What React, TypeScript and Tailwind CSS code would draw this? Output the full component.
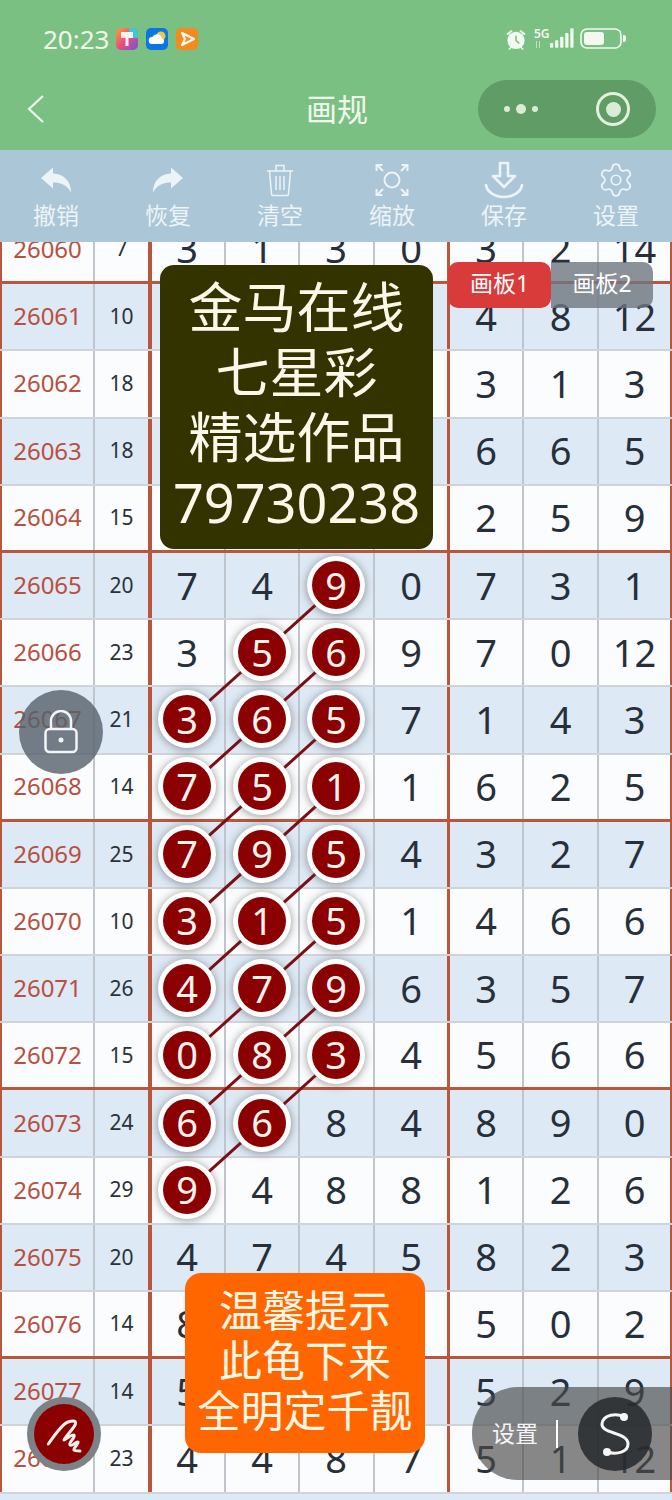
import { Settings } from "lucide-react";

type Row = { id: number; sum: number; nums: string[]; hits?: number[] };

const rows: Row[] = [
  { id: 26060, sum: 7, nums: ["3", "1", "3", "0", "3", "2", "14"] },
  { id: 26061, sum: 10, nums: ["", "", "", "", "4", "8", "12"] },
  { id: 26062, sum: 18, nums: ["", "", "", "", "3", "1", "3"] },
  { id: 26063, sum: 18, nums: ["", "", "", "", "6", "6", "5"] },
  { id: 26064, sum: 15, nums: ["", "", "", "", "2", "5", "9"] },
  { id: 26065, sum: 20, nums: ["7", "4", "9", "0", "7", "3", "1"], hits: [2] },
  { id: 26066, sum: 23, nums: ["3", "5", "6", "9", "7", "0", "12"], hits: [1, 2] },
  { id: 26067, sum: 21, nums: ["3", "6", "5", "7", "1", "4", "3"], hits: [0, 1, 2] },
  { id: 26068, sum: 14, nums: ["7", "5", "1", "1", "6", "2", "5"], hits: [0, 1, 2] },
  { id: 26069, sum: 25, nums: ["7", "9", "5", "4", "3", "2", "7"], hits: [0, 1, 2] },
  { id: 26070, sum: 10, nums: ["3", "1", "5", "1", "4", "6", "6"], hits: [0, 1, 2] },
  { id: 26071, sum: 26, nums: ["4", "7", "9", "6", "3", "5", "7"], hits: [0, 1, 2] },
  { id: 26072, sum: 15, nums: ["0", "8", "3", "4", "5", "6", "6"], hits: [0, 1, 2] },
  { id: 26073, sum: 24, nums: ["6", "6", "8", "4", "8", "9", "0"], hits: [0, 1] },
  { id: 26074, sum: 29, nums: ["9", "4", "8", "8", "1", "2", "6"], hits: [0] },
  { id: 26075, sum: 20, nums: ["4", "7", "4", "5", "8", "2", "3"] },
  { id: 26076, sum: 14, nums: ["8", "", "", "", "5", "0", "2"] },
  { id: 26077, sum: 14, nums: ["5", "", "", "", "5", "2", "9"] },
  { id: 26078, sum: 23, nums: ["4", "4", "8", "7", "5", "1", "12"] },
];

const ROW_H = 67.2;
const colX = [187, 262, 336];

// diagonal links, each one runs from the third ball column down to the first
const links = [5, 6, 7, 8, 9, 10, 11, 12];

const cellBorders = [
  "pr-[2px] border-r-2 border-r-[#c0c5cb]",
  "border-r-2 border-r-[#c0c5cb]",
  "pr-[1px] border-r-2 border-r-[#c0c5cb]",
  "border-r-[3px] border-r-[#b8573c]",
  "border-r-2 border-r-[#c0c5cb]",
  "border-r-2 border-r-[#c0c5cb]",
  "border-r-2 border-r-[#b8573c]",
];

const Ball = ({ n }: { n: string }) => (
  <div className="relative z-10 flex h-[58px] w-[58px] items-center justify-center rounded-full bg-white shadow-[0_1px_8px_rgba(60,60,60,0.55)]">
    <div className="flex h-[48px] w-[48px] items-center justify-center rounded-full bg-[#8b0000] text-[38px] text-[#fbf3ee]">
      {n}
    </div>
  </div>
);

const TableRow = ({ row, index }: { row: Row; index: number }) => {
  const isBlue = index % 2 === 1;
  const isGroupEnd = index % 4 === 0;

  return (
    <div
      className={`grid h-[67.2px] grid-cols-[95px_57px_74px_74px_75px_75px_74px_75px_73px] ${
        isBlue ? "bg-[#dde9f5]" : "bg-[#fbfcfd]"
      } ${isGroupEnd ? "border-b-[3px] border-b-[#b8573c]" : "border-b-2 border-b-[#d0d4d9]"}`}
    >
      <div className="flex items-center justify-center border-x-2 border-l-[#b8573c] border-r-[#c0c5cb] pb-[1px] text-[24px] text-[#b8503f]">
        {row.id}
      </div>
      <div className="flex items-center justify-center border-r-4 border-r-[#b8573c] text-[21px] text-[#2a3138]">
        {row.sum}
      </div>
      {row.nums.map((n, i) => (
        <div
          key={i}
          className={`flex items-center justify-center pb-[1px] text-[38px] text-[#27303a] ${cellBorders[i]}`}
        >
          {row.hits?.includes(i) ? <Ball n={n} /> : n}
        </div>
      ))}
    </div>
  );
};

const StatusApps = () => (
  <div className="ml-[7px] flex items-center gap-[8px]">
    <svg width="22" height="22" viewBox="0 0 22 22">
      <defs>
        <linearGradient id="a1" x1="0" y1="0" x2="1" y2="1">
          <stop offset="0" stopColor="#f7a13c" />
          <stop offset="0.5" stopColor="#ee4b7c" />
          <stop offset="1" stopColor="#6a55e0" />
        </linearGradient>
      </defs>
      <rect width="22" height="22" rx="5" fill="url(#a1)" />
      <path d="M13 0h4a5 5 0 0 1 5 5v5h-9z" fill="#3fc7d8" />
      <path d="M5 4h12v6h-4.500v8h-3v-8H5z" fill="#fff" opacity="0.9" />
    </svg>
    <svg width="22" height="22" viewBox="0 0 22 22">
      <rect width="22" height="22" rx="5" fill="#0a76e6" />
      <circle cx="15" cy="8" r="4.500" fill="#f8c63c" />
      <path d="M6 16a3.500 3.500 0 0 1 .4-7 5 5 0 0 1 9.400 1.200A3 3 0 0 1 16 16z" fill="#fff" />
    </svg>
    <svg width="22" height="22" viewBox="0 0 22 22">
      <rect width="22" height="22" rx="5" fill="#f58a1f" />
      <path d="M6 5l12 6-12 6 3-6z" fill="none" stroke="#fff" strokeWidth="2" strokeLinejoin="round" />
    </svg>
  </div>
);

const StatusRight = () => (
  <div className="mt-[4px] flex items-start text-[#f3f8f0]">
    <svg width="24" height="23" viewBox="0 0 24 24" fill="currentColor">
      <circle cx="12" cy="13" r="9" />
      <path d="M2 6l5-4 1.500 1.500-5 4zM22 6l-5-4-1.500 1.500 5 4zM4 22l3-3 1 1-3 3zM20 22l-3-3-1 1 3 3z" />
      <path d="M12 8v5l3.500 3" fill="none" stroke="#7bc083" strokeWidth="1.600" />
    </svg>
    <div className="relative ml-[6px] h-[22px] w-[16px]">
      <span className="absolute top-0 left-0 text-[12px] leading-[12px] font-semibold">5G</span>
      <span className="absolute top-[13px] left-[2px] h-[7px] w-[1px] bg-current opacity-60" />
      <span className="absolute top-[13px] left-[5px] h-[7px] w-[1px] bg-current opacity-60" />
    </div>
    <svg width="24" height="21" viewBox="0 0 26 22" fill="currentColor">
      <rect x="0" y="16" width="3.500" height="5" rx="1" />
      <rect x="5.500" y="13" width="3.500" height="8" rx="1" />
      <rect x="11" y="9" width="3.500" height="12" rx="1" />
      <rect x="16.500" y="5" width="3.500" height="16" rx="1" />
      <rect x="22" y="0" width="3.500" height="21" rx="1" />
    </svg>
    <svg className="ml-[6px]" width="46" height="22" viewBox="0 0 46 22" fill="none">
      <rect x="1" y="1" width="40" height="19" rx="6" stroke="currentColor" strokeWidth="1.600" />
      <rect x="4" y="4" width="20" height="13" rx="3" fill="currentColor" />
      <path d="M43 7a3.500 3.500 0 0 1 0 7z" fill="currentColor" />
    </svg>
  </div>
);

const UndoIcon = ({ flip }: { flip?: boolean }) => (
  <svg width="32" height="28" viewBox="0 0 32 28" fill="currentColor" className={flip ? "-scale-x-100" : ""}>
    <path d="M1 12L13 1.500V7.500C24 8 31 15 31 26.500C27 19 21 16.500 13 16.500V22.500Z" />
  </svg>
);

const TrashIcon = () => (
  <svg width="28" height="34" viewBox="0 0 28 34" fill="none" stroke="currentColor" strokeWidth="1.500">
    <path d="M1 8h26M10 8V2.500h8V8M3.500 8l2 23a1.500 1.500 0 0 0 1.500 1.500h14a1.500 1.500 0 0 0 1.500-1.500l2-23" />
    <path d="M10 13v14M14 13v14M18 13v14" />
  </svg>
);

const ScaleIcon = () => (
  <svg width="34" height="34" viewBox="0 0 34 34" fill="none" stroke="currentColor" strokeWidth="2">
    <circle cx="17" cy="17" r="7.500" />
    <path d="M1.500 8V2h6M2 2l6 6M32.500 8V2h-6M32 2l-6 6M1.500 26v6h6M2 32l6-6M32.500 26v6h-6M32 32l-6-6" />
  </svg>
);

const SaveIcon = () => (
  <svg width="40" height="38" viewBox="0 0 40 38" fill="none" stroke="currentColor" strokeWidth="2.600" strokeLinejoin="round" strokeLinecap="round">
    <path d="M16 2h8v13h7L20 26 9 15h7z" />
    <path d="M2 24c1 7 9 12 18 12s17-5 18-12" />
  </svg>
);

const tools = [
  { label: "撤销", icon: <UndoIcon /> },
  { label: "恢复", icon: <UndoIcon flip /> },
  { label: "清空", icon: <TrashIcon /> },
  { label: "缩放", icon: <ScaleIcon /> },
  { label: "保存", icon: <SaveIcon /> },
  { label: "设置", icon: <Settings size={38} strokeWidth={1.1} /> },
];

const App = () => {
  return (
    <div className="relative h-[1500px] w-[672px] overflow-hidden bg-white [font-family:'Noto_Sans','Noto_Sans_CJK_SC',sans-serif]">
      {/* status bar + nav */}
      <div className="h-[150px] bg-[#7bc083] text-[#f1f7ec]">
        <div className="flex h-[80px] items-start justify-between pr-[46px] pl-[43px] pt-[24px]">
          <div className="flex items-center">
            <span className="text-[26px] leading-[30px]">20:23</span>
            <StatusApps />
          </div>
          <StatusRight />
        </div>
        <div className="relative flex h-[58px] items-center justify-between pr-[16px] pl-[26px]">
          <svg width="20" height="30" viewBox="0 0 20 30" fill="none" stroke="currentColor" strokeWidth="2.200">
            <path d="M17 2L3 15l14 13" />
          </svg>
          <span className="absolute left-[306px] text-[31px] leading-[40px]">画规</span>
          <div className="flex h-[58px] w-[178px] items-center justify-between rounded-full bg-[#5f9c66] pr-[26px] pl-[26px]">
            <div className="flex items-center gap-[6px]">
              <span className="h-[6px] w-[6px] rounded-full bg-[#dcebd6]" />
              <span className="h-[10px] w-[10px] rounded-full bg-[#dcebd6]" />
              <span className="h-[6px] w-[6px] rounded-full bg-[#dcebd6]" />
            </div>
            <div className="flex h-[34px] w-[34px] items-center justify-center rounded-full border-[3.5px] border-[#e4f0dc]">
              <span className="h-[15px] w-[15px] rounded-full bg-[#dcebd6]" />
            </div>
          </div>
        </div>
      </div>

      {/* toolbar */}
      <div className="flex h-[92px] bg-[#abc6d6] text-[#edf4f7]">
        {tools.map((tool) => (
          <div key={tool.label} className="flex flex-1 flex-col items-center pt-[11px]">
            <div className="flex h-[38px] items-center justify-center">{tool.icon}</div>
            <span className="mt-[1px] text-[23px] leading-[30px]">{tool.label}</span>
          </div>
        ))}
      </div>

      {/* table, scrolled so the first row is cut off */}
      <div className="h-[1258px] overflow-hidden">
        <div className="relative -mt-[25px]">
          {rows.map((row, i) => (
            <TableRow key={row.id} row={row} index={i} />
          ))}
          <div className="h-[67.2px] bg-[#dde9f5]" />
          <svg className="absolute top-0 left-0 z-[5]" width="672" height="1340">
            {links.map((r) => (
              <line
                key={r}
                x1={colX[2]}
                y1={ROW_H * r + ROW_H / 2}
                x2={colX[0]}
                y2={ROW_H * (r + 2) + ROW_H / 2}
                stroke="#7d0f14"
                strokeWidth="3"
              />
            ))}
          </svg>
        </div>
      </div>

      {/* overlays */}
      <div className="absolute top-[265px] left-[160px] z-20 flex h-[284px] w-[273px] flex-col items-center justify-center rounded-[14px] bg-[#333300] pb-[4px] text-[54px] leading-[65px] text-[#fbf8ea]">
        <span>金马在线</span>
        <span>七星彩</span>
        <span>精选作品</span>
        <span>79730238</span>
      </div>

      <div className="absolute top-[262px] left-[448px] z-20 flex h-[46px] text-[23px] text-white">
        <div className="z-10 flex w-[103px] items-center justify-center rounded-[10px] bg-[#d93a3a] pb-[3px]">画板1</div>
        <div className="flex w-[102px] items-center justify-center rounded-r-[10px] bg-[#6f767fcc] pb-[3px]">画板2</div>
      </div>

      <div className="absolute top-[690px] left-[19px] z-20 flex h-[84px] w-[84px] items-center justify-center rounded-full bg-[#56606acc]">
        <svg width="34" height="44" viewBox="0 0 34 44" fill="none" stroke="#f2f4f5" strokeWidth="2.500">
          <path d="M7 19v-8a10 10 0 0 1 20 0v8" />
          <rect x="1.500" y="19" width="31" height="23" rx="4" />
          <circle cx="17" cy="30" r="2.500" fill="#f2f4f5" stroke="none" />
        </svg>
      </div>

      <div className="absolute top-[1273px] left-[185px] z-20 flex h-[180px] w-[240px] flex-col items-center justify-center rounded-[16px] bg-[#ff6600] pb-[4px] text-[43px] leading-[50px] text-[#fff6e6]">
        <span>温馨提示</span>
        <span>此龟下来</span>
        <span>全明定千靓</span>
      </div>

      <div className="absolute top-[1397px] left-[27px] z-20 flex h-[74px] w-[74px] items-center justify-center rounded-full bg-[#7c8286]">
        <div className="flex h-[60px] w-[60px] items-center justify-center rounded-full bg-[#8b0000]">
          <svg width="40" height="40" viewBox="0 0 40 40" fill="none" stroke="#f7efec" strokeWidth="3" strokeLinecap="round" strokeLinejoin="round">
            <path d="M4.300 30C10 22 18 10 24 8C30 6 33 7 31 11C29 15 22 22 20 26C24 24 28 20 30 21C32 23 24 29 26 31C28 33 32 27 34 28C35 30 29 34 30 36C31 37 34 37 36 37" />
          </svg>
        </div>
      </div>

      <div className="absolute top-[1387px] left-[472px] z-20 flex h-[93px] w-[200px] items-center rounded-l-[46px] bg-[#4a4a4aa8]">
        <span className="ml-[20px] text-[23px] text-[#f4f4f4]">设置</span>
        <span className="ml-[18px] h-[28px] w-[2px] bg-white" />
        <div className="ml-[20px] flex h-[74px] w-[74px] items-center justify-center rounded-full bg-[#26292bd9]">
          <svg width="40" height="48" viewBox="0 0 40 48" fill="none" stroke="#f5f5f5" strokeWidth="3">
            <path d="M29 7C22 3 8 4 7 14C6 24 33 22 33 34C33 42 22 45 12 42" />
            <circle cx="29" cy="7" r="4" fill="#f5f5f5" stroke="none" />
            <circle cx="12" cy="42" r="4" fill="#f5f5f5" stroke="none" />
          </svg>
        </div>
      </div>
    </div>
  );
};

export default App;
